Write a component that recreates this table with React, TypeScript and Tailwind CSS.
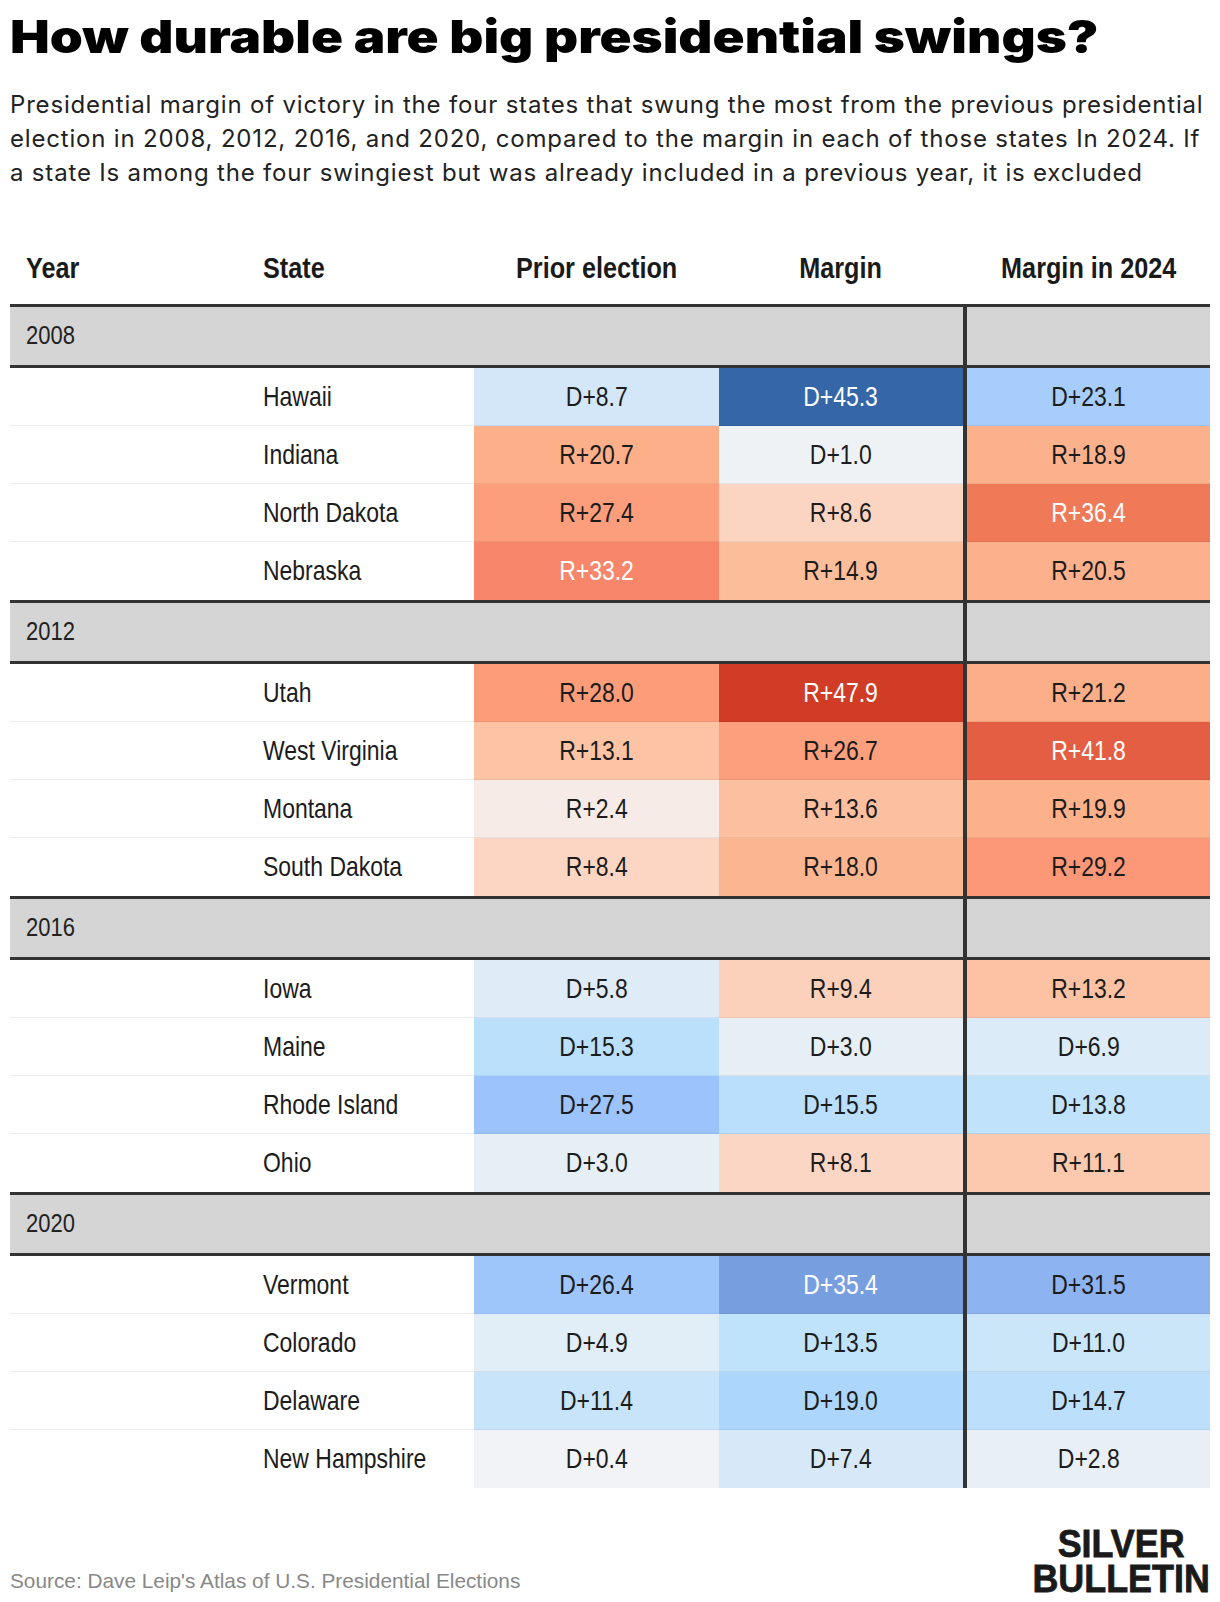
import React from 'react'

type Cell = { v: string; bg: string; light?: boolean }
type Row = { state: string; cells: Cell[] }
type Group = { year: string; rows: Row[] }

const groups: Group[] = [
  {
    year: '2008',
    rows: [
      { state: 'Hawaii', cells: [{ v: 'D+8.7', bg: '#d3e7f9' }, { v: 'D+45.3', bg: '#3567a8', light: true }, { v: 'D+23.1', bg: '#a6cdfb' }] },
      { state: 'Indiana', cells: [{ v: 'R+20.7', bg: '#fcaf89' }, { v: 'D+1.0', bg: '#eef2f5' }, { v: 'R+18.9', bg: '#fcb18d' }] },
      { state: 'North Dakota', cells: [{ v: 'R+27.4', bg: '#fc9d7b' }, { v: 'R+8.6', bg: '#fcd5c2' }, { v: 'R+36.4', bg: '#f07a58', light: true }] },
      { state: 'Nebraska', cells: [{ v: 'R+33.2', bg: '#f8866a', light: true }, { v: 'R+14.9', bg: '#fcbd9b' }, { v: 'R+20.5', bg: '#fcb08b' }] },
    ],
  },
  {
    year: '2012',
    rows: [
      { state: 'Utah', cells: [{ v: 'R+28.0', bg: '#fc9c79' }, { v: 'R+47.9', bg: '#d03c26', light: true }, { v: 'R+21.2', bg: '#fcae88' }] },
      { state: 'West Virginia', cells: [{ v: 'R+13.1', bg: '#fcc3a4' }, { v: 'R+26.7', bg: '#fc9f7d' }, { v: 'R+41.8', bg: '#e35e42', light: true }] },
      { state: 'Montana', cells: [{ v: 'R+2.4', bg: '#f6ebe6' }, { v: 'R+13.6', bg: '#fcbf9f' }, { v: 'R+19.9', bg: '#fcb18b' }] },
      { state: 'South Dakota', cells: [{ v: 'R+8.4', bg: '#fcd6c3' }, { v: 'R+18.0', bg: '#fcb591' }, { v: 'R+29.2', bg: '#fc9877' }] },
    ],
  },
  {
    year: '2016',
    rows: [
      { state: 'Iowa', cells: [{ v: 'D+5.8', bg: '#dfebf7' }, { v: 'R+9.4', bg: '#fcd1bb' }, { v: 'R+13.2', bg: '#fcc2a3' }] },
      { state: 'Maine', cells: [{ v: 'D+15.3', bg: '#bae0fc' }, { v: 'D+3.0', bg: '#e7eff6' }, { v: 'D+6.9', bg: '#dbebf8' }] },
      { state: 'Rhode Island', cells: [{ v: 'D+27.5', bg: '#9cc3fb' }, { v: 'D+15.5', bg: '#b9dffc' }, { v: 'D+13.8', bg: '#c1e2fb' }] },
      { state: 'Ohio', cells: [{ v: 'D+3.0', bg: '#e7eff6' }, { v: 'R+8.1', bg: '#fcd6c4' }, { v: 'R+11.1', bg: '#fcc9ae' }] },
    ],
  },
  {
    year: '2020',
    rows: [
      { state: 'Vermont', cells: [{ v: 'D+26.4', bg: '#9fc6fb' }, { v: 'D+35.4', bg: '#779fdf', light: true }, { v: 'D+31.5', bg: '#8db3f0' }] },
      { state: 'Colorado', cells: [{ v: 'D+4.9', bg: '#e1edf7' }, { v: 'D+13.5', bg: '#c0e3fc' }, { v: 'D+11.0', bg: '#cbe5f9' }] },
      { state: 'Delaware', cells: [{ v: 'D+11.4', bg: '#c8e4fa' }, { v: 'D+19.0', bg: '#add6fc' }, { v: 'D+14.7', bg: '#bce0fc' }] },
      { state: 'New Hampshire', cells: [{ v: 'D+0.4', bg: '#f1f3f6' }, { v: 'D+7.4', bg: '#d7e9f8' }, { v: 'D+2.8', bg: '#e8eff6' }] },
    ],
  },
]

// no condensed face installed, so the Arial-metric face is squeezed horizontally
const sans = "font-['Liberation_Sans',Arial,sans-serif]"
const cols = 'grid grid-cols-[237px_227px_245px_244px_4px_243px]'
const rowLine = 'border-b border-[#ececec]'

const ValueCell = ({ c, last }: { c: Cell; last: boolean }) => (
  <div
    className={`flex items-center justify-center text-[28px] ${last ? '' : 'border-b border-[rgba(0,0,0,0.06)]'} ${
      c.light ? 'text-white' : 'text-[#1c1c1c]'
    }`}
    style={{ backgroundColor: c.bg }}
  >
    <span className="inline-block scale-x-[0.82] whitespace-nowrap">{c.v}</span>
  </div>
)

const HeadCell = ({ label, center }: { label: string; center?: boolean }) => (
  <div className={center ? 'text-center' : 'pl-[16px]'}>
    <span className={`inline-block scale-x-[0.87] whitespace-nowrap ${center ? '' : 'origin-left'}`}>{label}</span>
  </div>
)

const App = () => {
  return (
    <div className="w-[1220px] h-[1602px] bg-white text-[#111] px-[10px] flex flex-col">
      <h1 className="mt-[14px] text-[45px] leading-[46px] font-black font-['Inter',sans-serif] text-black whitespace-nowrap">
        <span className="inline-block origin-left scale-x-[1.177]">How durable are big presidential swings?</span>
      </h1>
      <p className="mt-[28px] text-[24px] leading-[34px] text-[#222] font-['Inter',sans-serif] whitespace-nowrap tracking-[0.82px]">
        Presidential margin of victory in the four states that swung the most from the previous presidential
        <br />
        election in 2008, 2012, 2016, and 2020, compared to the margin in each of those states In 2024. If
        <br />
        a state Is among the four swingiest but was already included in a previous year, it is excluded
      </p>

      <div className={`mt-[44px] ${sans}`}>
        <div className={`${cols} h-[70px] items-center text-[29px] font-bold text-[#1a1a1a]`}>
          <HeadCell label="Year" />
          <HeadCell label="State" />
          <HeadCell label="Prior election" center />
          <HeadCell label="Margin" center />
          <div />
          <HeadCell label="Margin in 2024" center />
        </div>

        {groups.map((g) => (
          <div key={g.year}>
            <div className="h-[3px] bg-[#333]" />
            <div className={`${cols} h-[58px] bg-[#d5d5d5]`}>
              <div className="col-span-4 flex items-center pl-[16px] text-[25px] text-[#222]">
                <span className="inline-block origin-left scale-x-[0.88]">{g.year}</span>
              </div>
              <div className="bg-[#333]" />
              <div />
            </div>
            <div className="h-[3px] bg-[#333]" />
            {g.rows.map((r, i) => {
              const last = i === g.rows.length - 1
              return (
                <div key={r.state} className={`${cols} h-[58px]`}>
                  <div className={last ? '' : rowLine} />
                  <div className={`flex items-center pl-[16px] text-[28px] text-[#1c1c1c] ${last ? '' : rowLine}`}>
                    <span className="inline-block origin-left scale-x-[0.82] whitespace-nowrap">{r.state}</span>
                  </div>
                  <ValueCell c={r.cells[0]} last={last} />
                  <ValueCell c={r.cells[1]} last={last} />
                  <div className="bg-[#333]" />
                  <ValueCell c={r.cells[2]} last={last} />
                </div>
              )
            })}
          </div>
        ))}
      </div>

      <div className="mt-auto mb-[6px] flex items-end justify-between">
        <div className={`text-[20.8px] text-[#888] ${sans}`}>
          Source: Dave Leip's Atlas of U.S. Presidential Elections
        </div>
        <div
          className={`text-center text-[39px] leading-[35px] font-bold text-[#1a1a1a] ${sans} origin-right scale-x-[0.92] [-webkit-text-stroke:0.8px_#1a1a1a]`}
        >
          SILVER
          <br />
          BULLETIN
        </div>
      </div>
    </div>
  )
}

export default App
